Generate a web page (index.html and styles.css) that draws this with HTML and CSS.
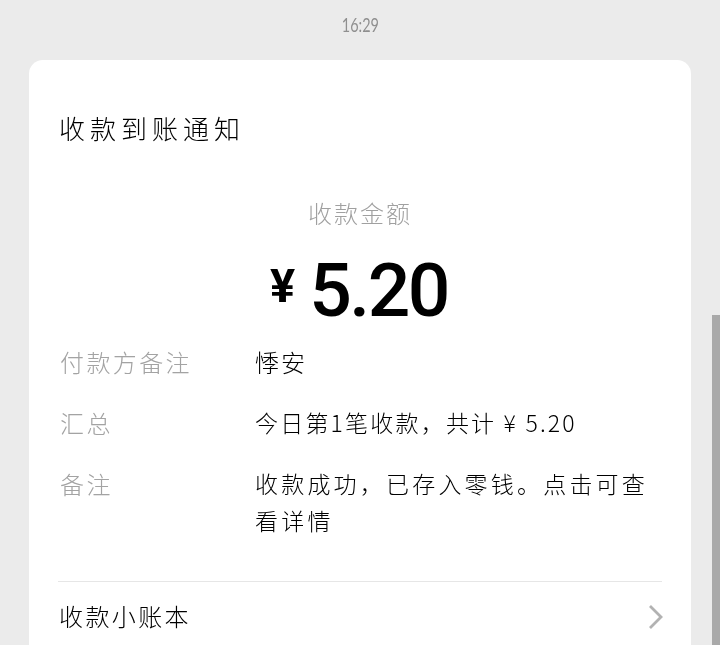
FILE: index.html
```html
<!DOCTYPE html>
<html>
  <head>
    <meta charset="utf-8" />
    <title>收款到账通知</title>
    <link rel="stylesheet" href="styles.css">
  </head>

  <body>
    <div class="time"><span class="timeText">16:29</span></div>
    <div class="card">
      <h1 class="title">收款到账通知</h1>
      <div class="amountLabel">收款金额</div>
      <div class="amount"><span class="yen">¥</span><span class="num">5.20</span></div>
      <div class="rows">
        <div class="row">
          <div class="key">付款方备注</div>
          <div class="val">悸安</div>
        </div>
        <div class="row">
          <div class="key">汇总</div>
          <div class="val val-small val-tight">今日第1笔收款，共计 ¥ 5.20</div>
        </div>
        <div class="row">
          <div class="key">备注</div>
          <div class="val val-small">收款成功，已存入零钱。点击可查看详情</div>
        </div>
      </div>
      <div class="footer">
        <span class="footerText">收款小账本</span>
        <svg class="arrow" width="16" height="26" viewBox="0 0 16 26">
          <path d="M2 2 L13 13 L2 24" fill="none" stroke="#b2b2b2" stroke-width="2.8" />
        </svg>
      </div>
    </div>
    <div class="scrollbar"></div>
  </body>
</html>
```

FILE: styles.css
```css
* {
  margin: 0;
  padding: 0;
  box-sizing: border-box;
}

html,
body {
  height: 645px;
  overflow: hidden;
}

body {
  background-color: #ebebeb;
  font-family: "Noto Sans CJK SC", "Liberation Sans", sans-serif;
  font-weight: 300;
  position: relative;
}

.time {
  height: 60px;
  padding-top: 13px;
  text-align: center;
  font-size: 19px;
  line-height: 24px;
  color: #8f8f8f;
  font-family: "Lato", sans-serif;
  font-weight: 400;
  will-change: transform;
}

.timeText {
  display: inline-block;
  transform: scaleX(0.76);
}

.card {
  margin: 0 29px;
  height: 600px;
  padding: 50px 29px 0;
  background-color: #fff;
  border-radius: 14px;
  will-change: transform;
}

.title {
  font-size: 26px;
  font-weight: 300;
  line-height: 36px;
  letter-spacing: 5px;
  color: #000;
  padding-left: 1px;
}

.amountLabel {
  margin-top: 50px;
  text-align: center;
  font-size: 24px;
  line-height: 34px;
  letter-spacing: 2px;
  color: #a0a0a0;
}

.amount {
  margin-top: 19px;
  height: 82px;
  line-height: 82px;
  padding-right: 2px;
  text-align: center;
  white-space: nowrap;
  color: #000;
  font-family: "Roboto", sans-serif;
  font-weight: 500;
}

.yen {
  font-size: 47px;
  line-height: 0;
  font-weight: 700;
  margin-right: 14px;
  vertical-align: 14px;
}

.num {
  font-size: 75px;
  letter-spacing: -2.5px;
}

.rows {
  margin-top: 12px;
}

.row {
  display: flex;
  margin-bottom: 24px;
  padding-left: 2px;
}

.key {
  width: 195px;
  flex: none;
  font-size: 24px;
  line-height: 37px;
  letter-spacing: 2.4px;
  color: #a3a3a3;
}

.val {
  flex: 1;
  font-size: 24px;
  line-height: 37px;
  letter-spacing: 2px;
  color: #000;
}

.val-small {
  font-size: 23px;
  letter-spacing: 3.2px;
}

.val-tight {
  letter-spacing: 2.2px;
}

.footer {
  display: flex;
  justify-content: space-between;
  align-items: center;
  height: 68px;
  border-top: 1px solid #e6e6e6;
  margin-top: 42px;
  padding-left: 1px;
}

.footerText {
  font-size: 24px;
  letter-spacing: 2.4px;
  color: #000;
}

.arrow {
  display: block;
  margin-top: 3px;
  margin-right: -2px;
}

.scrollbar {
  position: absolute;
  right: 0;
  top: 315px;
  width: 8px;
  height: 330px;
  background-color: #a9a9a9;
}
```
